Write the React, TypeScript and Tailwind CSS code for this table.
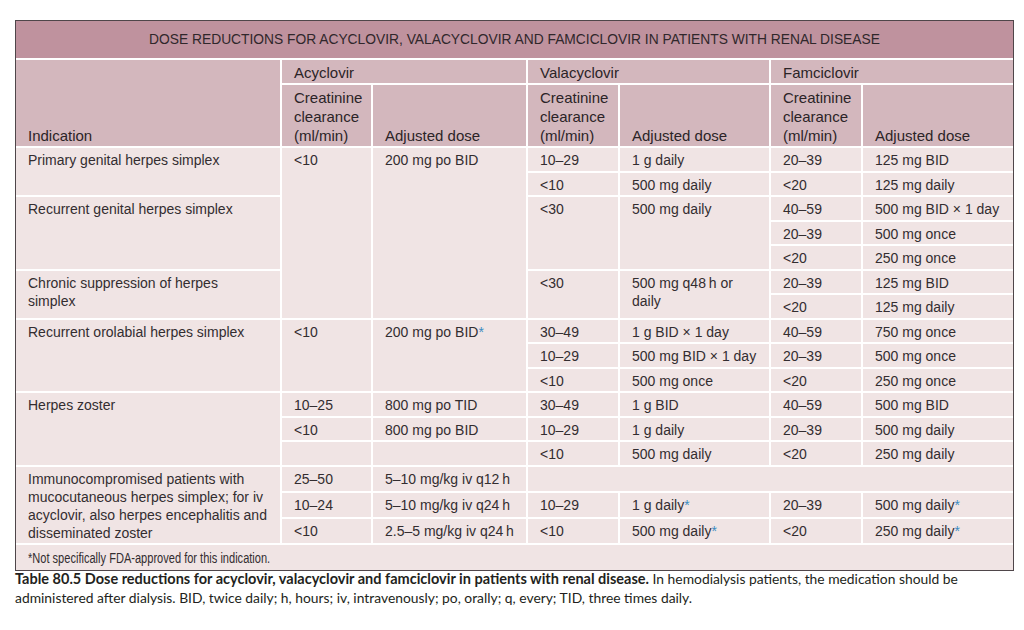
import React from 'react';

const sans = { fontFamily: '"Liberation Sans", Arial, sans-serif' };

const Star = () => <span className="text-[#3a8cc2]">*</span>;

// body cell
const Td: React.FC<{ children?: React.ReactNode; rowSpan?: number; colSpan?: number }> = ({ children, rowSpan, colSpan }) => (
  <td
    rowSpan={rowSpan}
    colSpan={colSpan}
    className="border-2 border-white bg-[#f0e4e4] px-3 pt-[3px] pb-[1.5px] align-top text-[14px] leading-[18px] text-[#332d30]"
  >
    {children}
  </td>
);

const Th: React.FC<{ children?: React.ReactNode; rowSpan?: number; colSpan?: number; bottom?: boolean }> = ({ children, rowSpan, colSpan, bottom }) => (
  <th
    rowSpan={rowSpan}
    colSpan={colSpan}
    className={
      'border-2 border-white bg-[#d3b7bd] px-3 text-left font-normal text-[15px] leading-[19px] text-[#2b2427] ' +
      (bottom ? 'align-bottom pt-[3px] pb-[1px]' : 'align-top pt-[2.5px] pb-[1.5px]')
    }
  >
    {children}
  </th>
);

const CrCl = () => (
  <>
    Creatinine
    <br />
    clearance
    <br />
    (ml/min)
  </>
);

export default function App() {
  return (
    <div className="min-h-[630px] w-[1024px] bg-white pl-[15px] pt-[20px]">
      <div className="w-[999px] border border-[#4f464a]" style={sans}>
        <table className="w-full table-fixed border-collapse border-hidden">
          <colgroup>
            <col className="w-[265px]" />
            <col className="w-[91px]" />
            <col className="w-[155px]" />
            <col className="w-[92px]" />
            <col className="w-[151px]" />
            <col className="w-[92px]" />
            <col />
          </colgroup>
          <thead>
            <tr>
              <th
                colSpan={7}
                className="border-2 border-white bg-[#bf929e] py-[9.5px] text-center font-normal text-[13.8px] leading-[18px] text-[#30272b]"
              >
                DOSE REDUCTIONS FOR ACYCLOVIR, VALACYCLOVIR AND FAMCICLOVIR IN PATIENTS WITH RENAL DISEASE
              </th>
            </tr>
            <tr>
              <Th rowSpan={2} bottom>
                Indication
              </Th>
              <Th colSpan={2}>Acyclovir</Th>
              <Th colSpan={2}>Valacyclovir</Th>
              <Th colSpan={2}>Famciclovir</Th>
            </tr>
            <tr>
              <Th bottom>
                <CrCl />
              </Th>
              <Th bottom>Adjusted dose</Th>
              <Th bottom>
                <CrCl />
              </Th>
              <Th bottom>Adjusted dose</Th>
              <Th bottom>
                <CrCl />
              </Th>
              <Th bottom>Adjusted dose</Th>
            </tr>
          </thead>
          <tbody>
            {/* primary genital */}
            <tr>
              <Td rowSpan={2}>Primary genital herpes simplex</Td>
              <Td rowSpan={7}>&lt;10</Td>
              <Td rowSpan={7}>200 mg po BID</Td>
              <Td>10–29</Td>
              <Td>1 g daily</Td>
              <Td>20–39</Td>
              <Td>125 mg BID</Td>
            </tr>
            <tr>
              <Td>&lt;10</Td>
              <Td>500 mg daily</Td>
              <Td>&lt;20</Td>
              <Td>125 mg daily</Td>
            </tr>
            {/* recurrent genital */}
            <tr>
              <Td rowSpan={3}>Recurrent genital herpes simplex</Td>
              <Td rowSpan={3}>&lt;30</Td>
              <Td rowSpan={3}>500 mg daily</Td>
              <Td>40–59</Td>
              <Td>500 mg BID × 1 day</Td>
            </tr>
            <tr>
              <Td>20–39</Td>
              <Td>500 mg once</Td>
            </tr>
            <tr>
              <Td>&lt;20</Td>
              <Td>250 mg once</Td>
            </tr>
            {/* chronic suppression */}
            <tr>
              <Td rowSpan={2}>
                Chronic suppression of herpes
                <br />
                simplex
              </Td>
              <Td rowSpan={2}>&lt;30</Td>
              <Td rowSpan={2}>
                500 mg q48{'\u2009'}h or
                <br />
                daily
              </Td>
              <Td>20–39</Td>
              <Td>125 mg BID</Td>
            </tr>
            <tr>
              <Td>&lt;20</Td>
              <Td>125 mg daily</Td>
            </tr>
            {/* orolabial */}
            <tr>
              <Td rowSpan={3}>Recurrent orolabial herpes simplex</Td>
              <Td rowSpan={3}>&lt;10</Td>
              <Td rowSpan={3}>
                200 mg po BID
                <Star />
              </Td>
              <Td>30–49</Td>
              <Td>1 g BID × 1 day</Td>
              <Td>40–59</Td>
              <Td>750 mg once</Td>
            </tr>
            <tr>
              <Td>10–29</Td>
              <Td>500 mg BID × 1 day</Td>
              <Td>20–39</Td>
              <Td>500 mg once</Td>
            </tr>
            <tr>
              <Td>&lt;10</Td>
              <Td>500 mg once</Td>
              <Td>&lt;20</Td>
              <Td>250 mg once</Td>
            </tr>
            {/* zoster */}
            <tr>
              <Td rowSpan={3}>Herpes zoster</Td>
              <Td>10–25</Td>
              <Td>800 mg po TID</Td>
              <Td>30–49</Td>
              <Td>1 g BID</Td>
              <Td>40–59</Td>
              <Td>500 mg BID</Td>
            </tr>
            <tr>
              <Td>&lt;10</Td>
              <Td>800 mg po BID</Td>
              <Td>10–29</Td>
              <Td>1 g daily</Td>
              <Td>20–39</Td>
              <Td>500 mg daily</Td>
            </tr>
            <tr>
              <Td />
              <Td />
              <Td>&lt;10</Td>
              <Td>500 mg daily</Td>
              <Td>&lt;20</Td>
              <Td>250 mg daily</Td>
            </tr>
            {/* immunocompromised */}
            <tr>
              <Td rowSpan={3}>
                Immunocompromised patients with
                <br />
                mucocutaneous herpes simplex; for iv
                <br />
                acyclovir, also herpes encephalitis and
                <br />
                disseminated zoster
              </Td>
              <Td>25–50</Td>
              <Td>5–10 mg/kg iv q12{'\u2009'}h</Td>
              <Td colSpan={4} />
            </tr>
            <tr>
              <Td>10–24</Td>
              <Td>5–10 mg/kg iv q24{'\u2009'}h</Td>
              <Td>10–29</Td>
              <Td>
                1 g daily
                <Star />
              </Td>
              <Td>20–39</Td>
              <Td>
                500 mg daily
                <Star />
              </Td>
            </tr>
            <tr>
              <Td>&lt;10</Td>
              <Td>2.5–5 mg/kg iv q24{'\u2009'}h</Td>
              <Td>&lt;10</Td>
              <Td>
                500 mg daily
                <Star />
              </Td>
              <Td>&lt;20</Td>
              <Td>
                250 mg daily
                <Star />
              </Td>
            </tr>
            <tr>
              <td
                colSpan={7}
                className="border-2 border-white bg-[#f0e4e4] px-3 pt-[4px] pb-[3px] text-[14px] leading-[18px] text-[#332d30]"
              >
                <span className="inline-block origin-left scale-x-[0.79] whitespace-nowrap">
                  *Not specifically FDA-approved for this indication.
                </span>
              </td>
            </tr>
          </tbody>
        </table>
      </div>

      <p
        className="-mt-[2px] w-[999px] text-[13.85px] leading-[19px] text-[#231f20]"
        style={{ fontFamily: 'Lato, "Open Sans", sans-serif' }}
      >
        <span className="text-[14.5px] font-bold">
          Table 80.5 Dose reductions for acyclovir, valacyclovir and famciclovir in patients with renal disease.
        </span>{' '}
        In hemodialysis patients, the medication should be administered after dialysis. BID, twice daily; h, hours; iv,
        intravenously; po, orally; q, every; TID, three times daily.
      </p>
    </div>
  );
}
